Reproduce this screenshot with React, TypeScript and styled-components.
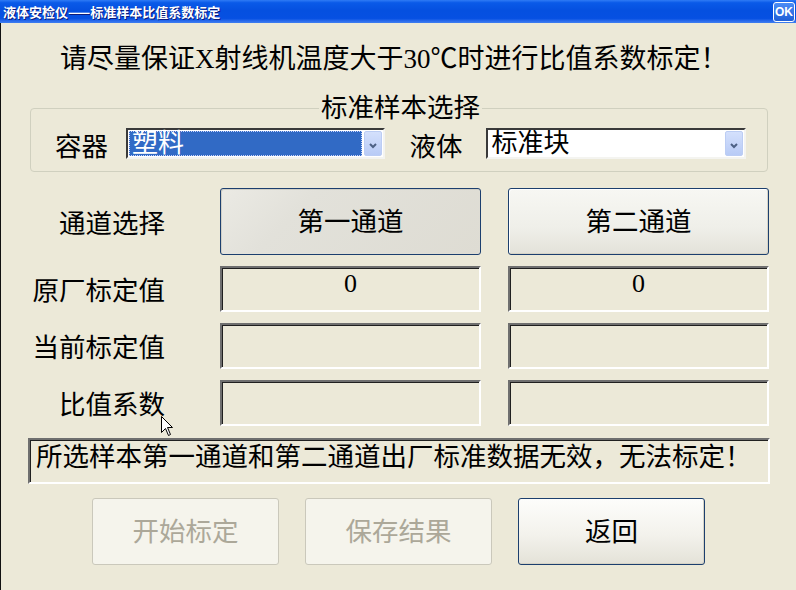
import styled, { createGlobalStyle } from "styled-components";

const GlobalStyle = createGlobalStyle`
  html, body {
    margin: 0;
    padding: 0;
    background: #ece9d8;
  }
  * {
    box-sizing: border-box;
  }
`;

const FONT = `"Liberation Serif", "Noto Sans CJK SC", serif`;

function Chevron() {
  return (
    <svg width="10" height="8" viewBox="0 0 10 8">
      <path d="M2 2 L5 5 L8 2" fill="none" stroke="#4d6185" strokeWidth="2" />
    </svg>
  );
}

function Cursor() {
  return (
    <svg width="13" height="21" viewBox="0 0 13 21">
      <path
        d="M0.5 0.5 L0.5 16.5 L4.5 12.5 L7.5 19.5 L9.5 18.5 L6.5 11.5 L11.5 11.5 Z"
        fill="#fff"
        stroke="#000"
        strokeWidth="1"
      />
    </svg>
  );
}

export default function App() {
  return (
    <>
      <GlobalStyle />
      <Window>
        <TitleBar>
          <TitleText>液体安检仪——标准样本比值系数标定</TitleText>
          <OkButton>OK</OkButton>
        </TitleBar>
        <Body>
          <Notice>请尽量保证X射线机温度大于30℃时进行比值系数标定！</Notice>

          <GroupBox>
            <Legend>标准样本选择</Legend>
            <SelectRow>
              <FieldLabel>容器</FieldLabel>
              <ComboBox $width={259}>
                <ComboText $selected>塑料</ComboText>
                <DropButton>
                  <Chevron />
                </DropButton>
              </ComboBox>
              <FieldLabel $gap={25}>液体</FieldLabel>
              <ComboBox $width={261} $gap={23}>
                <ComboText>标准块</ComboText>
                <DropButton>
                  <Chevron />
                </DropButton>
              </ComboBox>
            </SelectRow>
          </GroupBox>

          <ChannelGrid>
            <RowLabel>通道选择</RowLabel>
            <ChannelButton $pressed>第一通道</ChannelButton>
            <ChannelButton>第二通道</ChannelButton>

            <RowLabel>原厂标定值</RowLabel>
            <ValueBox>0</ValueBox>
            <ValueBox>0</ValueBox>

            <RowLabel>当前标定值</RowLabel>
            <ValueBox />
            <ValueBox />

            <RowLabel>比值系数</RowLabel>
            <ValueBox />
            <ValueBox />
          </ChannelGrid>

          <MessageBox>所选样本第一通道和第二通道出厂标准数据无效，无法标定！</MessageBox>

          <ActionRow>
            <ActionButton disabled>开始标定</ActionButton>
            <ActionButton disabled>保存结果</ActionButton>
            <ActionButton>返回</ActionButton>
          </ActionRow>
        </Body>
        <CursorLayer>
          <Cursor />
        </CursorLayer>
      </Window>
    </>
  );
}

const Window = styled.div`
  position: relative;
  width: 796px;
  height: 590px;
  overflow: hidden;
  display: flex;
  flex-direction: column;
  background: #ece9d8;
  font-family: ${FONT};
  color: #000;
`;

const TitleBar = styled.div`
  height: 23px;
  flex: none;
  display: flex;
  align-items: center;
  justify-content: space-between;
  padding: 0 1px 0 3px;
  background: linear-gradient(
    #2f7bf5 0%,
    #0a5ae8 12%,
    #0550e0 45%,
    #0650e2 80%,
    #2c6cec 92%,
    #3e7ff0 100%
  );
`;

const TitleText = styled.span`
  font-family: "Noto Sans CJK SC", sans-serif;
  font-weight: 700;
  font-size: 13px;
  line-height: 16px;
  color: #fff;
  text-shadow: 1px 1px 0 #0c1a7a;
`;

const OkButton = styled.div`
  width: 22px;
  height: 20px;
  border: 1px solid #fff;
  border-radius: 3px;
  background: linear-gradient(#4a8cf6, #1f5ed6);
  color: #fff;
  font-family: "Liberation Sans", sans-serif;
  font-weight: 700;
  font-size: 12px;
  line-height: 18px;
  text-align: center;
`;

const Body = styled.div`
  flex: 1;
  display: flex;
  flex-direction: column;
  padding-top: 21px;
  border-left: 1px solid #111;
  font-size: 26.5px;
`;

const Notice = styled.div`
  padding-left: 59px;
  font-size: 27px;
  line-height: 30px;
  white-space: nowrap;
`;

const GroupBox = styled.fieldset`
  margin: 20px 28px 0 29px;
  padding: 6px 21px 12px 24px;
  border: 1px solid #d0d0bf;
  border-radius: 4px;
  min-width: 0;
`;

const Legend = styled.legend`
  margin: 0 auto;
  padding: 0 2px;
  font-size: 26.5px;
  line-height: 28px;
`;

const SelectRow = styled.div`
  display: flex;
  align-items: center;
  height: 31px;
`;

const FieldLabel = styled.span<{ $gap?: number }>`
  margin-left: ${(p) => p.$gap ?? 0}px;
  width: 53px;
  line-height: 30px;
  white-space: nowrap;
  position: relative;
  top: 3px;
`;

const ComboBox = styled.div<{ $width: number; $gap?: number }>`
  margin-left: ${(p) => p.$gap ?? 18}px;
  width: ${(p) => p.$width}px;
  height: 31px;
  display: flex;
  align-items: stretch;
  padding: 1px;
  background: #fff;
  border: 2px solid;
  border-color: #3a3a3a #f4f4f0 #f4f4f0 #3a3a3a;
`;

const ComboText = styled.div<{ $selected?: boolean }>`
  flex: 1;
  margin-right: 2px;
  padding-left: 2px;
  font-size: 26px;
  line-height: 24px;
  white-space: nowrap;
  background: ${(p) => (p.$selected ? "#316ac5" : "transparent")};
  color: ${(p) => (p.$selected ? "#fff" : "#000")};
  border: 1px dotted ${(p) => (p.$selected ? "#c8d4ff" : "transparent")};
`;

const DropButton = styled.div`
  width: 18px;
  flex: none;
  display: flex;
  align-items: center;
  justify-content: center;
  padding-top: 4px;
  border: 1px solid #bccdf4;
  border-radius: 2px;
  background: linear-gradient(#d4e0fc, #b8cbf6);
`;

const ChannelGrid = styled.div`
  margin-top: 16px;
  padding-left: 27px;
  display: grid;
  grid-template-columns: 165px 261px 261px;
  grid-template-rows: 67px 46px 46px 46px;
  column-gap: 27px;
  row-gap: 11px;
`;

const RowLabel = styled.div`
  display: flex;
  align-items: center;
  justify-content: flex-end;
  padding-right: 28px;
  padding-top: 4px;
  line-height: 28px;
  white-space: nowrap;
`;

const ChannelButton = styled.div<{ $pressed?: boolean }>`
  display: flex;
  align-items: center;
  justify-content: center;
  border: 1px solid #1c3f6e;
  border-radius: 3px;
  line-height: 28px;
  background: ${(p) =>
    p.$pressed
      ? "linear-gradient(135deg, #ebeae4 0%, #e2e1da 30%, #dedcd3 100%)"
      : "linear-gradient(#f7f7f3 0%, #efefe9 60%, #e3e2d9 100%)"};
  box-shadow: ${(p) =>
    p.$pressed
      ? "inset 1px 1px 0 #d0cfc6"
      : "inset -1px -1px 0 #d6d3c6, inset 1px 1px 0 #ffffff"};
`;

const sunken = `
  border: 2px solid;
  border-color: #6f6f6f #ffffff #ffffff #6f6f6f;
  box-shadow: inset 1px 1px 0 #202020;
`;

const ValueBox = styled.div`
  ${sunken}
  text-align: center;
  padding-top: 3px;
  font-size: 26px;
  line-height: 26px;
`;

const MessageBox = styled.div`
  ${sunken}
  margin: 12px 26px 0 27px;
  height: 46px;
  padding: 2px 0 0 6px;
  line-height: 30px;
  white-space: nowrap;
  overflow: hidden;
`;

const ActionRow = styled.div`
  margin-top: 14px;
  padding-left: 91px;
  display: flex;
  gap: 26px;
`;

const ActionButton = styled.button`
  width: 187px;
  height: 67px;
  padding: 0;
  font-family: ${FONT};
  font-size: 26.5px;
  line-height: 28px;
  border-radius: 3px;
  color: #000;
  border: 1px solid #1c3f6e;
  background: linear-gradient(#fdfdfb 0%, #f3f2ec 55%, #e4e2d8 100%);
  box-shadow: inset -1px -1px 0 #d6d3c6;

  &:disabled {
    color: #aca899;
    border-color: #cac8bb;
    background: #f5f4ec;
    box-shadow: none;
  }
`;

const CursorLayer = styled.div`
  position: absolute;
  left: 161px;
  top: 416px;
  line-height: 0;
  pointer-events: none;
`;
